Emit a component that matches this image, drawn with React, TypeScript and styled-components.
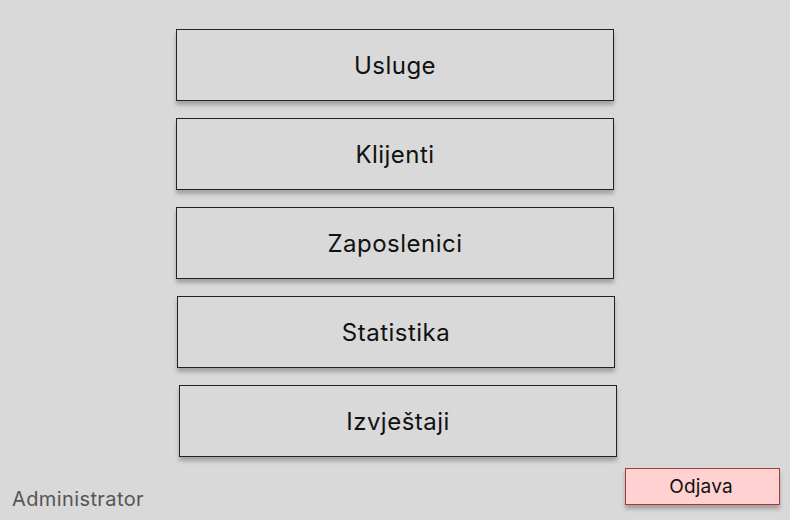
import styled, {createGlobalStyle} from "styled-components";

const GlobalStyle = createGlobalStyle`
  html, body {
    margin: 0;
    padding: 0;
    background: #d9d9d9;
  }
  body {
    font-family: Inter, "Noto Sans", sans-serif;
  }
`;

const menuItems = [
    {label: "Usluge", shift: 0},
    {label: "Klijenti", shift: 0},
    {label: "Zaposlenici", shift: 0},
    {label: "Statistika", shift: 1},
    {label: "Izvještaji", shift: 3},
];

export default function App() {
    return (
        <Page>
            <GlobalStyle/>
            <Menu>
                {menuItems.map((item) => (
                    <MenuButton key={item.label} $shift={item.shift}>
                        {item.label}
                    </MenuButton>
                ))}
            </Menu>
            <Footer>
                <RoleLabel>Administrator</RoleLabel>
                <LogoutButton>Odjava</LogoutButton>
            </Footer>
        </Page>
    );
}

const Page = styled.div`
  width: 790px;
  height: 520px;
  box-sizing: border-box;
  padding-top: 29px;
  display: flex;
  flex-direction: column;
  background: #d9d9d9;
  overflow: hidden;
`;

const Menu = styled.div`
  display: flex;
  flex-direction: column;
  align-items: center;
  gap: 17px;
`;

const MenuButton = styled.button<{ $shift: number }>`
  width: 438px;
  height: 72px;
  box-sizing: border-box;
  margin-left: ${(p) => p.$shift * 2}px;
  padding: 0;
  display: flex;
  justify-content: center;
  align-items: center;
  background: #d9d9d9;
  border: 1px solid #222;
  box-shadow: 0 4px 4px rgba(0, 0, 0, 0.25);
  font-family: Inter, "Noto Sans", sans-serif;
  font-size: 24px;
  letter-spacing: 0.02em;
  line-height: normal;
  color: #111;
  cursor: pointer;
`;

const Footer = styled.div`
  margin-top: 11px;
  padding: 0 10px 0 12px;
  display: flex;
  justify-content: space-between;
  align-items: flex-start;
`;

const RoleLabel = styled.span`
  margin-top: 19px;
  font-size: 20px;
  letter-spacing: 0.02em;
  line-height: 24px;
  color: #555;
`;

const LogoutButton = styled.button`
  width: 155px;
  height: 37px;
  box-sizing: border-box;
  padding: 0 3px 0 0;
  background: #ffd1d1;
  border: 1px solid #a83a3a;
  box-shadow: 0 4px 4px rgba(0, 0, 0, 0.25);
  font-family: Inter, "Noto Sans", sans-serif;
  font-size: 19px;
  letter-spacing: 0.01em;
  color: #111;
  cursor: pointer;
`;
